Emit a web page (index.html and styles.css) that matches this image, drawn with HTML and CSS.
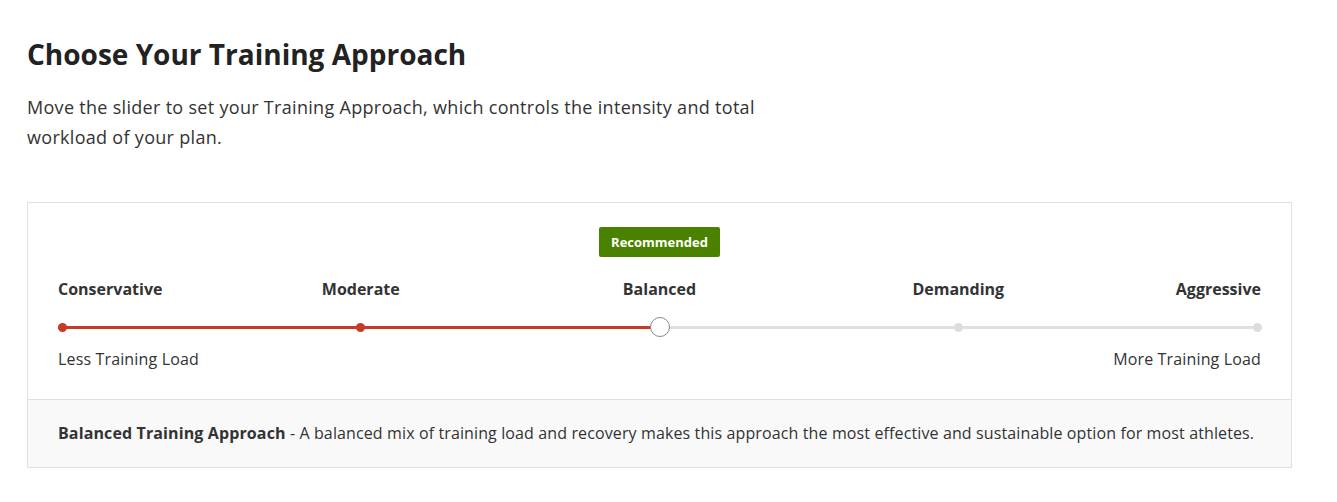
FILE: index.html
```html
<!DOCTYPE html>
<html lang="en">
<head>
<meta charset="utf-8">
<title>Choose Your Training Approach</title>
<link rel="stylesheet" href="styles.css">
</head>
<body>
<main class="page">
  <h1 class="title">Choose Your Training Approach</h1>
  <p class="intro">Move the slider to set your Training Approach, which controls the intensity and total workload of your plan.</p>

  <section class="card">
    <div class="card-main">
      <div class="badge-row"><span class="badge">Recommended</span></div>
      <div class="stops labels">
        <div class="stop first"><span>Conservative</span></div>
        <div class="stop"><span>Moderate</span></div>
        <div class="stop"><span>Balanced</span></div>
        <div class="stop"><span>Demanding</span></div>
        <div class="stop last"><span>Aggressive</span></div>
      </div>
      <div class="track">
        <div class="stops dots">
          <div class="stop"><span class="dot on"></span></div>
          <div class="stop"><span class="dot on"></span></div>
          <div class="stop"><span class="thumb"></span></div>
          <div class="stop"><span class="dot"></span></div>
          <div class="stop"><span class="dot"></span></div>
        </div>
      </div>
      <div class="ends">
        <span>Less Training Load</span>
        <span>More Training Load</span>
      </div>
    </div>
    <div class="card-foot">
      <p><strong>Balanced Training Approach</strong> - A balanced mix of training load and recovery makes this approach the most effective and sustainable option for most athletes.</p>
    </div>
  </section>
</main>
</body>
</html>
```

FILE: styles.css
```css
* { box-sizing: border-box; }
html, body { margin: 0; padding: 0; background: #fff; }
body {
  font-family: "Open Sans", "Liberation Sans", sans-serif;
  color: #333;
}
.page {
  padding: 34px 46px 0 27px;
}
.title {
  margin: 0;
  font-size: 28px;
  line-height: 40px;
  font-weight: 700;
  color: #222;
}
.intro {
  margin: 18px 0 0;
  max-width: 780px;
  font-size: 18px;
  line-height: 30px;
  letter-spacing: 0.3px;
  color: #333;
}
.card {
  margin-top: 50px;
  border: 1px solid #e0e0e0;
  width: 1265px;
}
.card-main {
  padding: 24px 30px 28px;
}
.badge-row {
  display: flex;
  justify-content: center;
  padding-left: 0;
}
.badge {
  display: inline-block;
  background: #4a8200;
  color: #fff;
  font-size: 13px;
  font-weight: 700;
  line-height: 30px;
  padding: 0 12px;
  border-radius: 2px;
}
.stops {
  display: flex;
  justify-content: space-between;
}
.stop {
  width: 8px;
  display: flex;
  justify-content: center;
  white-space: nowrap;
}
.labels { margin-top: 20px; }
.labels .stop span {
  font-size: 16px;
  font-weight: 700;
  line-height: 24px;
  color: #333;
}
.labels .stop.first { justify-content: flex-start; }
.labels .stop.last { justify-content: flex-end; }
.track {
  margin-top: 16px;
  height: 20px;
  display: flex;
  align-items: center;
  background: linear-gradient(#c63a27, #c63a27) left center / 50% 3px no-repeat,
              linear-gradient(#e0e0e0, #e0e0e0) right center / 50% 3px no-repeat;
}
.dots { width: 100%; align-items: center; }
.dots .stop { align-items: center; height: 20px; }
.dot {
  flex: none;
  width: 9px;
  height: 9px;
  border-radius: 50%;
  background: #ddd;
}
.dot.on { background: #c63a27; }
.thumb {
  flex: none;
  width: 20px;
  height: 20px;
  border-radius: 50%;
  background: #fff;
  border: 1px solid #8a8a8a;
}
.ends {
  margin-top: 10px;
  display: flex;
  justify-content: space-between;
  font-size: 16px;
  line-height: 24px;
  letter-spacing: 0.15px;
  color: #333;
}
.card-foot {
  border-top: 1px solid #e0e0e0;
  background: #f9f9f9;
  padding: 22px 30px;
}
.card-foot p {
  margin: 0;
  font-size: 16px;
  line-height: 23px;
  letter-spacing: 0.12px;
  color: #333;
  white-space: nowrap;
}
.card-foot strong { font-weight: 700; }
```
